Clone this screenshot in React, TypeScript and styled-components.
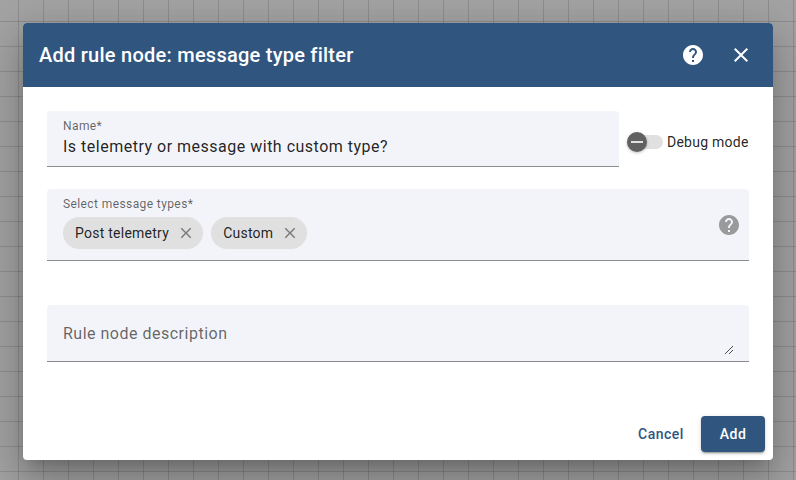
import React from 'react';
import styled, { createGlobalStyle } from 'styled-components';

const GlobalStyle = createGlobalStyle`
  * { box-sizing: border-box; }
  body { margin: 0; overflow: hidden; font-family: Roboto, sans-serif; }
  button { font-family: inherit; border: 0; padding: 0; background: none; cursor: pointer; }
`;

const Canvas = styled.div`
  height: 480px;
  padding: 23px;
  background-color: #a3a3a3;
  background-image:
    linear-gradient(90deg, rgba(0, 0, 0, 0.13) 1px, transparent 1px),
    linear-gradient(rgba(0, 0, 0, 0.13) 1px, transparent 1px);
  background-size: 25px 25px;
  background-position: 18px 21px;
`;

const Dialog = styled.section`
  display: flex;
  flex-direction: column;
  width: 750px;
  height: 437px;
  overflow: hidden;
  border-radius: 4px;
  background: #fff;
  color: rgba(0, 0, 0, 0.87);
  box-shadow:
    0 11px 15px -7px rgba(0, 0, 0, 0.2),
    0 24px 38px 3px rgba(0, 0, 0, 0.14),
    0 9px 46px 8px rgba(0, 0, 0, 0.12);
`;

const Header = styled.header`
  display: flex;
  align-items: center;
  height: 64px;
  padding: 0 8px 0 16px;
  background: #305680;
  color: #fff;
`;

const Title = styled.h2`
  flex: 1;
  margin: 0;
  font-size: 20px;
  font-weight: 500;
  line-height: 32px;
  letter-spacing: 0.25px;
`;

const IconButton = styled.button`
  display: grid;
  place-items: center;
  width: 48px;
  height: 48px;
  color: inherit;
`;

const Icon = styled.svg<{ $size?: number }>`
  display: block;
  flex: none;
  width: ${({ $size = 24 }) => $size}px;
  height: ${({ $size = 24 }) => $size}px;
  fill: currentColor;
`;

const Content = styled.div`
  display: flex;
  flex-direction: column;
  flex: 1;
  padding: 24px 24px 0;
`;

const NameRow = styled.div`
  display: flex;
  gap: 8px;
  margin-bottom: 16px;
`;

const Field = styled.div<{ $height: number; $gap?: number }>`
  display: flex;
  flex: none;
  height: ${({ $height }) => $height}px;
  margin-bottom: ${({ $gap = 0 }) => $gap}px;
  padding: 0 16px;
  border-bottom: 1px solid #8c8c8f;
  border-radius: 4px 4px 0 0;
  background: #f3f4f9;
`;

const NameField = styled(Field)`
  width: 572px;
`;

const FieldBody = styled.div`
  flex: 1;
  padding-top: 7px;
`;

const Label = styled.div`
  color: rgba(0, 0, 0, 0.6);
  font-size: 12px;
  line-height: 16px;
  letter-spacing: 0.4px;
`;

const Value = styled.div`
  padding-top: 1px;
  font-size: 16px;
  line-height: 24px;
  letter-spacing: 0.5px;
`;

const Placeholder = styled(Value)`
  flex: 1;
  padding-top: 17px;
  color: rgba(0, 0, 0, 0.6);
`;

const Toggle = styled.label`
  display: flex;
  align-items: center;
  height: 62px;
  gap: 4px;
  font-size: 14px;
  line-height: 20px;
  letter-spacing: 0.25px;
  white-space: nowrap;
`;

const Track = styled.span`
  display: flex;
  align-items: center;
  width: 36px;
  height: 14px;
  border-radius: 7px;
  background: #e0e0e0;
`;

const Thumb = styled.span`
  display: grid;
  place-items: center;
  flex: none;
  width: 20px;
  height: 20px;
  border-radius: 50%;
  background: #616161;
  box-shadow: 0 1px 3px rgba(0, 0, 0, 0.25);

  &::after {
    content: '';
    width: 12px;
    height: 2px;
    background: #e0e0e0;
  }
`;

const Chips = styled.div`
  display: flex;
  gap: 8px;
  margin-top: 5px;
`;

const Chip = styled.div`
  display: flex;
  align-items: center;
  height: 32px;
  padding: 0 8px 0 12px;
  border-radius: 16px;
  background: #e0e0e0;
  font-size: 14px;
  line-height: 20px;
  letter-spacing: 0.25px;
`;

const ChipRemove = styled.button`
  margin-left: 8px;
  color: #7c7c7c;
`;

const Hint = styled.span`
  align-self: center;
  margin-right: -8px;
  color: #999a9c;
`;

const Resizer = styled(Icon)`
  align-self: flex-end;
  margin-bottom: 7px;
  fill: none;
  stroke: #4c4c4c;
  shape-rendering: crispEdges;
`;

const Actions = styled.footer`
  display: flex;
  justify-content: flex-end;
  gap: 8px;
  padding: 8px;
`;

const ActionButton = styled.button<{ $primary?: boolean }>`
  width: 64px;
  height: 36px;
  border-radius: 4px;
  color: ${({ $primary }) => ($primary ? '#fff' : '#305680')};
  background: ${({ $primary }) => ($primary ? '#305680' : 'transparent')};
  box-shadow: ${({ $primary }) =>
    $primary
      ? '0 3px 1px -2px rgba(0,0,0,.2), 0 2px 2px rgba(0,0,0,.14), 0 1px 5px rgba(0,0,0,.12)'
      : 'none'};
  font-size: 14px;
  font-weight: 500;
  letter-spacing: 0.5px;
`;

const HelpIcon = () => (
  <Icon viewBox="0 0 24 24">
    <path d="M12 2C6.48 2 2 6.48 2 12s4.48 10 10 10 10-4.48 10-10S17.52 2 12 2zm1 17h-2v-2h2v2zm2.07-7.75l-.9.92C13.45 12.9 13 13.5 13 15h-2v-.5c0-1.1.45-2.1 1.17-2.83l1.24-1.26c.37-.36.59-.86.59-1.41 0-1.1-.9-2-2-2s-2 .9-2 2H8c0-2.21 1.79-4 4-4s4 1.79 4 4c0 .88-.36 1.68-.93 2.25z" />
  </Icon>
);

const CloseIcon = ({ size = 24 }: { size?: number }) => (
  <Icon $size={size} viewBox="0 0 24 24">
    <path d="M19 6.41L17.59 5 12 10.59 6.41 5 5 6.41 10.59 12 5 17.59 6.41 19 12 13.41 17.59 19 19 17.59 13.41 12z" />
  </Icon>
);

const messageTypes = ['Post telemetry', 'Custom'];

export default function App() {
  return (
    <>
      <GlobalStyle />
      <Canvas>
        <Dialog role="dialog">
          <Header>
            <Title>Add rule node: message type filter</Title>
            <IconButton aria-label="Help"><HelpIcon /></IconButton>
            <IconButton aria-label="Close"><CloseIcon /></IconButton>
          </Header>
          <Content>
            <NameRow>
              <NameField $height={56}>
                <FieldBody>
                  <Label>Name*</Label>
                  <Value>Is telemetry or message with custom type?</Value>
                </FieldBody>
              </NameField>
              <Toggle>
                <Track><Thumb /></Track>
                Debug mode
              </Toggle>
            </NameRow>
            <Field $height={72} $gap={44}>
              <FieldBody>
                <Label>Select message types*</Label>
                <Chips>
                  {messageTypes.map((type) => (
                    <Chip key={type}>
                      {type}
                      <ChipRemove aria-label="Remove"><CloseIcon size={18} /></ChipRemove>
                    </Chip>
                  ))}
                </Chips>
              </FieldBody>
              <Hint><HelpIcon /></Hint>
            </Field>
            <Field $height={57}>
              <Placeholder>Rule node description</Placeholder>
              <Resizer $size={9} viewBox="0 0 9 9">
                <path d="M1 9L9 1M5 9L9 5" />
              </Resizer>
            </Field>
          </Content>
          <Actions>
            <ActionButton>Cancel</ActionButton>
            <ActionButton $primary>Add</ActionButton>
          </Actions>
        </Dialog>
      </Canvas>
    </>
  );
}
